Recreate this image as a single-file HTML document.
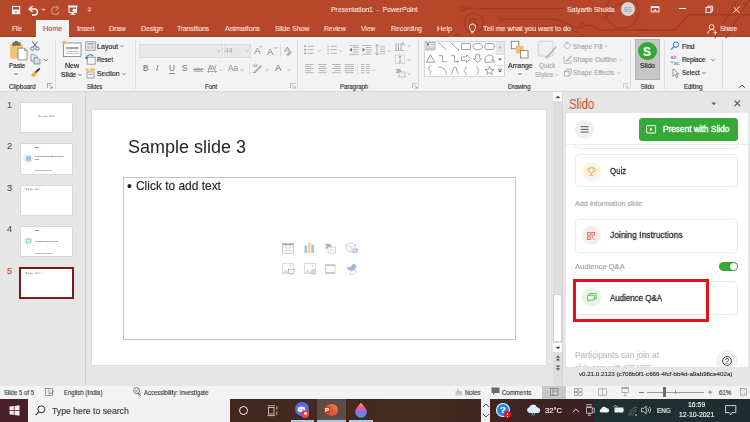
<!DOCTYPE html>
<html><head><meta charset="utf-8">
<style>
*{margin:0;padding:0;box-sizing:border-box}
html,body{width:750px;height:422px;overflow:hidden;background:#E6E6E6;font-family:"Liberation Sans",sans-serif}
.a{position:absolute}
.t{position:absolute;white-space:nowrap;line-height:1;will-change:transform;-webkit-text-stroke:0.15px currentColor}
svg{position:absolute;overflow:visible}
</style></head><body>
<div class="a" style="left:0px;top:0px;width:750px;height:37px;background:#B7472A;"></div>
<svg style="left:440px;top:0px;" width="210" height="37" viewBox="0 0 210 37"><g fill="none" stroke="#A33E24" stroke-width="1.5">
<circle cx="22.6" cy="8.4" r="2.1"/><path d="M24.7 8.4 H125"/>
<circle cx="34" cy="22.8" r="9.6"/><path d="M28.5 19 H37 M29.5 19 V24.5 A4 4 0 1 1 33 30"/>
<circle cx="61" cy="19.2" r="2"/><path d="M63 19.2 H117 L136.7 28 H140.5 M144.5 25.5 H152 L158.6 30 H212"/><circle cx="142.5" cy="25.5" r="2"/>
<path d="M90 32 Q100 25 117 25.5 H124 L146 37"/>
<circle cx="182.4" cy="11.5" r="16.5"/><path d="M163 19 L178 4 H192"/>
<circle cx="17" cy="36" r="2"/>
</g></svg>
<div class="a" style="left:0px;top:37px;width:750px;height:54px;background:#F3F3F3;"></div>
<div class="a" style="left:0px;top:91px;width:750px;height:1px;background:#D9D9D9;"></div>
<div class="a" style="left:0px;top:36px;width:750px;height:1px;background:#B13F22;"></div>
<div class="a" style="left:0px;top:37px;width:750px;height:1px;background:#FBFBFB;"></div>
<div class="a" style="left:35.5px;top:20px;width:33.5px;height:18px;background:#F3F3F3;border-left:0.8px solid #FAFAFA;border-right:0.8px solid #FAFAFA"></div>
<svg style="left:11px;top:5px;" width="10" height="10" viewBox="0 0 10 10"><rect x="1.5" y="1.5" width="7.2" height="7.2" fill="none" stroke="#FFFFFF" stroke-width="1.05"/><rect x="1.5" y="4.6" width="7.2" height="4.1" fill="#FFFFFF"/><rect x="3.8" y="6.3" width="2.2" height="1.4" fill="#C77A62"/></svg>
<svg style="left:28px;top:5px;" width="11" height="10" viewBox="0 0 11 10"><path d="M2 4 H6.5 A3 3 0 0 1 6.5 10 H4" fill="none" stroke="#FFFFFF" stroke-width="1.4"/><path d="M4.5 1 L1.2 4 L4.5 7" fill="none" stroke="#FFFFFF" stroke-width="1.4"/></svg>
<svg style="left:41px;top:8px;" width="5" height="4" viewBox="0 0 5 4"><path d="M0.5 0.8 L2.5 3 L4.5 0.8Z" fill="#F0C8BC"/></svg>
<svg style="left:50px;top:5px;" width="11" height="10" viewBox="0 0 11 10"><path d="M8 3 A3.8 3.8 0 1 0 9 6.5" fill="none" stroke="#D58A76" stroke-width="1.3"/><path d="M6 1 L8.5 3 L6 5" fill="none" stroke="#D58A76" stroke-width="1.2"/></svg>
<svg style="left:67px;top:5px;" width="12" height="10" viewBox="0 0 12 10"><rect x="1" y="0.5" width="9.5" height="1.4" fill="#FFFFFF"/><rect x="2" y="2" width="7.5" height="5.5" fill="none" stroke="#FFFFFF" stroke-width="1"/><circle cx="7.3" cy="5.2" r="1.8" fill="#FFFFFF"/><path d="M5.8 7.5 L5 9.5 M5.8 7.5 L7 9.5 M3.5 9.3 H8.5" stroke="#FFFFFF" stroke-width="0.9"/></svg>
<svg style="left:87px;top:7px;" width="5" height="6" viewBox="0 0 5 6"><rect x="0.6" y="0.6" width="3.6" height="0.9" fill="#F3D3C9"/><path d="M0.5 2.8 L2.4 5 L4.3 2.8Z" fill="#F3D3C9"/></svg>
<div class="t " style="left:331.40px;top:6px;font-size:7.90px;color:#F8E6E0;transform-origin:0 0;transform:scaleX(0.861);">Presentation1  -  PowerPoint</div>
<div class="t " style="left:567.20px;top:6px;font-size:7.70px;color:#FAEAE5;transform-origin:0 0;transform:scaleX(0.876);">Satyarth Shukla</div>
<div class="a" style="left:621px;top:2px;width:14px;height:14px;border-radius:50%;background:#D8D8D8"></div>
<div class="t " style="left:624.30px;top:7px;font-size:6.60px;color:#858585;transform-origin:0 0;transform:scaleX(0.852);-webkit-text-stroke:0;">SS</div>
<svg style="left:650px;top:6px;" width="10" height="7" viewBox="0 0 10 7"><rect x="1.2" y="0.7" width="7.8" height="5.2" fill="none" stroke="#FFFFFF" stroke-width="0.9"/><rect x="1.2" y="0.7" width="7.8" height="1.3" fill="#FFFFFF"/><path d="M3.3 4.9 L5.1 3 L6.9 4.9Z" fill="#FFFFFF"/></svg>
<div class="a" style="left:679.3px;top:8.3px;width:6.4px;height:0.9px;background:#FFFFFF;"></div>
<svg style="left:705px;top:5px;" width="9" height="9" viewBox="0 0 9 9"><rect x="1" y="2.6" width="5" height="5" fill="none" stroke="#FFFFFF" stroke-width="0.9"/><path d="M2.6 2.6 V1.2 H7.6 V6.2 H6" fill="none" stroke="#FFFFFF" stroke-width="0.9"/></svg>
<svg style="left:732px;top:5px;" width="9" height="9" viewBox="0 0 9 9"><path d="M1.2 1.5 L7.6 7.9 M7.6 1.5 L1.2 7.9" stroke="#FFFFFF" stroke-width="0.95"/></svg>
<svg style="left:640px;top:0px;" width="110" height="37" viewBox="0 0 110 37"><g fill="none" stroke="#A33E24" stroke-width="1.4"><path d="M-2 30 H35.2 L48.4 14.7 H112"/><path d="M74.8 38 L98.2 -1"/><path d="M86 38 L110 -2"/></g></svg>
<div class="t " style="left:12.00px;top:25px;font-size:7.40px;color:#F7E3DD;transform-origin:0 0;transform:scaleX(0.839);">File</div>
<div class="t " style="left:42.70px;top:25px;font-size:7.40px;color:#B7472A;transform-origin:0 0;transform:scaleX(0.978);">Home</div>
<div class="t " style="left:76.70px;top:25px;font-size:7.40px;color:#F7E3DD;transform-origin:0 0;transform:scaleX(0.951);">Insert</div>
<div class="t " style="left:109.30px;top:25px;font-size:7.40px;color:#F7E3DD;transform-origin:0 0;transform:scaleX(0.950);">Draw</div>
<div class="t " style="left:140.70px;top:25px;font-size:7.40px;color:#F7E3DD;transform-origin:0 0;transform:scaleX(0.938);">Design</div>
<div class="t " style="left:177.30px;top:25px;font-size:7.40px;color:#F7E3DD;transform-origin:0 0;transform:scaleX(0.891);">Transitions</div>
<div class="t " style="left:225.00px;top:25px;font-size:7.40px;color:#F7E3DD;transform-origin:0 0;transform:scaleX(0.956);">Animations</div>
<div class="t " style="left:275.00px;top:25px;font-size:7.40px;color:#F7E3DD;transform-origin:0 0;transform:scaleX(0.926);">Slide Show</div>
<div class="t " style="left:324.30px;top:25px;font-size:7.40px;color:#F7E3DD;transform-origin:0 0;transform:scaleX(0.894);">Review</div>
<div class="t " style="left:361.00px;top:25px;font-size:7.40px;color:#F7E3DD;transform-origin:0 0;transform:scaleX(0.899);">View</div>
<div class="t " style="left:390.70px;top:25px;font-size:7.40px;color:#F7E3DD;transform-origin:0 0;transform:scaleX(0.919);">Recording</div>
<div class="t " style="left:436.70px;top:25px;font-size:7.40px;color:#F7E3DD;transform-origin:0 0;transform:scaleX(0.986);">Help</div>
<svg style="left:468px;top:23px;" width="9" height="12" viewBox="0 0 9 12"><path d="M4.5 1 A3.2 3.2 0 0 0 2.4 6.6 L2.9 8.4 H6.1 L6.6 6.6 A3.2 3.2 0 0 0 4.5 1Z" fill="none" stroke="#FFFFFF" stroke-width="0.95"/><path d="M3.2 9.8 H5.8" stroke="#FFFFFF" stroke-width="0.9"/></svg>
<div class="t " style="left:483.20px;top:25px;font-size:7.40px;color:#FBEBE6;transform-origin:0 0;transform:scaleX(0.964);">Tell me what you want to do</div>
<svg style="left:707px;top:24px;" width="11" height="11" viewBox="0 0 11 11"><circle cx="4.6" cy="3" r="2.4" fill="none" stroke="#FFFFFF" stroke-width="0.9"/><path d="M0.9 9.8 A3.9 3.9 0 0 1 7.4 6.4" fill="none" stroke="#FFFFFF" stroke-width="0.9"/><path d="M8.3 6.8 V10.6 M6.4 8.7 H10.2" stroke="#FFFFFF" stroke-width="0.85"/></svg>
<div class="t " style="left:720.00px;top:25px;font-size:7.40px;color:#FBEBE6;transform-origin:0 0;transform:scaleX(0.876);">Share</div>
<div class="a" style="left:55px;top:40px;width:1px;height:49px;background:#DCDCDC;"></div>
<div class="a" style="left:134.7px;top:40px;width:1px;height:49px;background:#DCDCDC;"></div>
<div class="a" style="left:297.4px;top:40px;width:1px;height:49px;background:#DCDCDC;"></div>
<div class="a" style="left:418.4px;top:40px;width:1px;height:49px;background:#DCDCDC;"></div>
<div class="a" style="left:630.4px;top:40px;width:1px;height:49px;background:#DCDCDC;"></div>
<div class="a" style="left:663.7px;top:40px;width:1px;height:49px;background:#DCDCDC;"></div>
<div class="a" style="left:722px;top:40px;width:1px;height:49px;background:#DCDCDC;"></div>
<svg style="left:9px;top:41px;" width="19" height="20" viewBox="0 0 19 20"><rect x="1.2" y="2.8" width="12.6" height="14.8" rx="0.6" fill="#EFC26E"/>
<rect x="3.3" y="1.2" width="8.2" height="3.6" rx="0.5" fill="#6B6B6B"/><rect x="5.8" y="0" width="3.2" height="2" fill="#6B6B6B"/>
<path d="M9 7.2 H15.6 L18 9.6 V18.9 H9Z" fill="#FFFFFF" stroke="#7A7A7A" stroke-width="0.8"/>
<path d="M15.6 7.2 V9.6 H18" fill="none" stroke="#7A7A7A" stroke-width="0.7"/></svg>
<div class="t " style="left:8.70px;top:63px;font-size:7.10px;color:#1A1A1A;transform-origin:0 0;transform:scaleX(0.898);">Paste</div>
<svg style="left:12.399999999999999px;top:71.2px;" width="8" height="6" viewBox="0 0 8 6"><path d="M2.4 2.2 L4 3.8 L5.6 2.2" fill="none" stroke="#555" stroke-width="0.9"/></svg>
<svg style="left:30px;top:41px;" width="10" height="10" viewBox="0 0 10 10"><path d="M2.3 0.5 L6.8 6.5 M7.5 0.5 L3 6.5" stroke="#555" stroke-width="0.9"/>
<circle cx="2.4" cy="7.6" r="1.7" fill="none" stroke="#3F86D1" stroke-width="1"/><circle cx="7.4" cy="7.6" r="1.7" fill="none" stroke="#3F86D1" stroke-width="1"/></svg>
<svg style="left:30px;top:54px;" width="11" height="11" viewBox="0 0 11 11"><path d="M1 0.7 H5 L7 2.7 V7 H1Z" fill="#E3EEF8" stroke="#777" stroke-width="0.7"/>
<path d="M4 3.7 H8 L10 5.7 V10 H4Z" fill="#CFE1F3" stroke="#777" stroke-width="0.7"/></svg>
<svg style="left:41.7px;top:56.6px;" width="8" height="6" viewBox="0 0 8 6"><path d="M2.4 2.2 L4 3.8 L5.6 2.2" fill="none" stroke="#555" stroke-width="0.9"/></svg>
<svg style="left:30px;top:68px;" width="11" height="10" viewBox="0 0 11 10"><path d="M1 7 L4.5 3.5 L7 6 L3.5 9.5Z" fill="#EBB546"/>
<path d="M5.5 4.5 L9.8 0.5" stroke="#444" stroke-width="1.8"/></svg>
<div class="t " style="left:9.30px;top:84px;font-size:6.80px;color:#2E2E2E;transform-origin:0 0;transform:scaleX(0.917);">Clipboard</div>
<svg style="left:47px;top:83px;" width="6" height="6" viewBox="0 0 6 6"><path d="M0.5 0.5 H5 M0.5 0.5 V5" stroke="#888" stroke-width="0.7"/><path d="M2 2 L5.2 5.2 M5.2 3 V5.2 H3" stroke="#888" stroke-width="0.7" fill="none"/></svg>
<svg style="left:61px;top:40px;" width="21" height="18" viewBox="0 0 21 18"><rect x="2.5" y="3" width="17.5" height="13.5" fill="#FFFFFF" stroke="#7E7E7E" stroke-width="0.8"/>
<rect x="5" y="7" width="12.5" height="2.2" fill="#A9A9A9"/><rect x="5" y="11" width="12.5" height="0.9" fill="#BDBDBD"/><rect x="5" y="13" width="12.5" height="0.9" fill="#BDBDBD"/>
<circle cx="3" cy="2.5" r="1.7" fill="#F2B84B"/><path d="M3 0 V5 M0.5 2.5 H5.5 M1.2 0.7 L4.8 4.3 M4.8 0.7 L1.2 4.3" stroke="#F2B84B" stroke-width="0.5"/></svg>
<div class="t " style="left:65.30px;top:63px;font-size:7.10px;color:#1A1A1A;transform-origin:0 0;transform:scaleX(0.986);">New</div>
<div class="t " style="left:61.20px;top:72px;font-size:7.10px;color:#1A1A1A;transform-origin:0 0;transform:scaleX(0.969);">Slide</div>
<svg style="left:76.3px;top:72.3px;" width="8" height="6" viewBox="0 0 8 6"><path d="M2.4 2.2 L4 3.8 L5.6 2.2" fill="none" stroke="#555" stroke-width="0.9"/></svg>
<svg style="left:85px;top:41px;" width="11" height="10" viewBox="0 0 11 10"><rect x="0.8" y="0.8" width="9.4" height="8.4" fill="#F4F4F4" stroke="#8A8A8A" stroke-width="0.8"/><rect x="2.2" y="2.2" width="6.6" height="1.3" fill="#9A9A9A"/><rect x="2.2" y="4.5" width="3" height="3.3" fill="#C8C8C8"/><rect x="5.8" y="4.5" width="3" height="3.3" fill="#C8C8C8"/></svg>
<div class="t " style="left:97.00px;top:44px;font-size:7.10px;color:#1A1A1A;transform-origin:0 0;transform:scaleX(0.985);">Layout</div>
<svg style="left:117.7px;top:43.2px;" width="8" height="6" viewBox="0 0 8 6"><path d="M2.5 2.25 L4 3.75 L5.5 2.25" fill="none" stroke="#666" stroke-width="0.9"/></svg>
<svg style="left:85px;top:54px;" width="11" height="11" viewBox="0 0 11 11"><rect x="2.2" y="3.2" width="8" height="7" fill="#F4F4F4" stroke="#8A8A8A" stroke-width="0.8"/><path d="M1.2 4.5 A4 4 0 0 1 8 2" fill="none" stroke="#2E75C8" stroke-width="1.1"/><path d="M0 3 L1.4 5.4 L3.4 3.6" fill="#2E75C8"/></svg>
<div class="t " style="left:97.00px;top:57px;font-size:7.10px;color:#1A1A1A;transform-origin:0 0;transform:scaleX(0.863);">Reset</div>
<svg style="left:85px;top:68px;" width="11" height="11" viewBox="0 0 11 11"><rect x="0.5" y="0.5" width="3.2" height="2.2" fill="#EFB94F"/><rect x="5" y="0.5" width="5" height="2.2" fill="#EFB94F"/><rect x="2" y="4" width="7" height="6" fill="#F7F7F7" stroke="#8A8A8A" stroke-width="0.8"/><rect x="3.5" y="6" width="4" height="0.9" fill="#9A9A9A"/></svg>
<div class="t " style="left:97.00px;top:71px;font-size:7.10px;color:#1A1A1A;transform-origin:0 0;transform:scaleX(0.950);">Section</div>
<svg style="left:119.6px;top:70.8px;" width="8" height="6" viewBox="0 0 8 6"><path d="M2.5 2.25 L4 3.75 L5.5 2.25" fill="none" stroke="#666" stroke-width="0.9"/></svg>
<div class="t " style="left:86.80px;top:84px;font-size:6.80px;color:#2E2E2E;transform-origin:0 0;transform:scaleX(0.837);">Slides</div>
<div class="a" style="left:139px;top:44px;width:84px;height:14px;background:#E8E8E8;border:1px solid #DDDDDD"></div>
<div class="a" style="left:224px;top:44px;width:27px;height:14px;background:#E8E8E8;border:1px solid #DDDDDD"></div>
<svg style="left:215px;top:48px;" width="8" height="6" viewBox="0 0 8 6"><path d="M2.6 2.3 L4 3.7 L5.4 2.3" fill="none" stroke="#B5B5B5" stroke-width="0.9"/></svg>
<svg style="left:242.7px;top:48px;" width="8" height="6" viewBox="0 0 8 6"><path d="M2.6 2.3 L4 3.7 L5.4 2.3" fill="none" stroke="#B5B5B5" stroke-width="0.9"/></svg>
<div class="t " style="left:225.20px;top:48px;font-size:6.80px;color:#B0B0B0;">44</div>
<div class="t " style="left:254.00px;top:46px;font-size:9.50px;color:#9A9A9A;transform-origin:0 0;transform:scaleX(1.057);">A</div>
<svg style="left:259px;top:45px;" width="4" height="4" viewBox="0 0 4 4"><path d="M0.5 2.5 L1.8 0.8 L3.1 2.5" fill="none" stroke="#9A9A9A" stroke-width="0.7"/></svg>
<div class="t " style="left:267.10px;top:48px;font-size:8.30px;color:#9A9A9A;transform-origin:0 0;transform:scaleX(1.156);">A</div>
<svg style="left:273.5px;top:46px;" width="4" height="4" viewBox="0 0 4 4"><path d="M0.5 1 L1.8 2.7 L3.1 1" fill="none" stroke="#9A9A9A" stroke-width="0.7"/></svg>
<div class="a" style="left:279.5px;top:44px;width:1px;height:13px;background:#DDDDDD;"></div>
<div class="t " style="left:283.50px;top:46px;font-size:7.50px;color:#A0A0A0;transform-origin:0 0;transform:scaleX(1.299);">A</div>
<svg style="left:285px;top:48px;" width="8" height="8" viewBox="0 0 8 8"><path d="M1 6.5 L5 2.5 L7 4.5 L3 8.5Z" fill="#B5B5B5"/></svg>
<div class="t " style="left:142.70px;top:64px;font-size:8.30px;color:#8A8A8A;font-weight:bold;transform-origin:0 0;transform:scaleX(0.901);">B</div>
<div class="t" style="left:155.6px;top:63.82px;font-size:8.3px;color:#8A8A8A;font-style:italic">I</div>
<div class="t " style="left:168.80px;top:64px;font-size:8.30px;color:#8A8A8A;">U</div>
<div class="a" style="left:168.6px;top:73.0px;width:6.4px;height:0.8px;background:#8A8A8A;"></div>
<div class="t " style="left:182.30px;top:64px;font-size:8.30px;color:#8A8A8A;transform-origin:0 0;transform:scaleX(1.011);">S</div>
<div class="t " style="left:193.50px;top:67px;font-size:6.60px;color:#9A9A9A;transform-origin:0 0;transform:scaleX(0.874);">abc</div>
<div class="a" style="left:193.3px;top:68.9px;width:9.7px;height:0.7px;background:#9A9A9A;"></div>
<div class="t " style="left:207.50px;top:65px;font-size:6.80px;color:#8A8A8A;transform-origin:0 0;transform:scaleX(0.981);">AV</div>
<svg style="left:207px;top:70px;" width="10" height="3" viewBox="0 0 10 3"><path d="M0.5 1.5 H9.5 M0.5 1.5 L2 0.3 M0.5 1.5 L2 2.7 M9.5 1.5 L8 0.3 M9.5 1.5 L8 2.7" stroke="#8A8A8A" stroke-width="0.7" fill="none"/></svg>
<svg style="left:216.9px;top:66.5px;" width="8" height="6" viewBox="0 0 8 6"><path d="M2.7 2.35 L4 3.65 L5.3 2.35" fill="none" stroke="#B0B0B0" stroke-width="0.9"/></svg>
<div class="t " style="left:228.00px;top:64px;font-size:8.30px;color:#9A9A9A;transform-origin:0 0;transform:scaleX(1.015);">Aa</div>
<svg style="left:237.6px;top:66.5px;" width="8" height="6" viewBox="0 0 8 6"><path d="M2.7 2.35 L4 3.65 L5.3 2.35" fill="none" stroke="#B0B0B0" stroke-width="0.9"/></svg>
<div class="a" style="left:248.5px;top:63px;width:1px;height:12px;background:#DDDDDD;"></div>
<svg style="left:252px;top:62px;" width="11" height="11" viewBox="0 0 11 11"><text x="1" y="5" font-size="4.5" fill="#999" font-family="Liberation Sans">ab</text><path d="M2 9.5 L8.5 3 L10 4.5 L3.5 11Z" fill="#B0B0B0"/><path d="M0.5 10.5 H4" stroke="#999" stroke-width="0.8"/></svg>
<svg style="left:263.2px;top:66.5px;" width="8" height="6" viewBox="0 0 8 6"><path d="M2.7 2.35 L4 3.65 L5.3 2.35" fill="none" stroke="#B0B0B0" stroke-width="0.9"/></svg>
<div class="t " style="left:275.00px;top:64px;font-size:9.00px;color:#8A8A8A;transform-origin:0 0;transform:scaleX(1.083);">A</div>
<svg style="left:285px;top:66.5px;" width="8" height="6" viewBox="0 0 8 6"><path d="M2.7 2.35 L4 3.65 L5.3 2.35" fill="none" stroke="#B0B0B0" stroke-width="0.9"/></svg>
<div class="t " style="left:205.20px;top:84px;font-size:6.80px;color:#2E2E2E;transform-origin:0 0;transform:scaleX(0.897);">Font</div>
<svg style="left:290px;top:83.3px;" width="6" height="6" viewBox="0 0 6 6"><path d="M0.5 0.5 H5 M0.5 0.5 V5" stroke="#AAA" stroke-width="0.7"/><path d="M2 2 L5.2 5.2 M5.2 3 V5.2 H3" stroke="#AAA" stroke-width="0.7" fill="none"/></svg>
<svg style="left:304px;top:45px;" width="10" height="10" viewBox="0 0 10 10"><circle cx="1.2" cy="1.2" r="1" fill="#9A9A9A"/><rect x="3.5" y="0.8" width="6.3" height="0.8" fill="#A8A8A8"/><circle cx="1.2" cy="4.7" r="1" fill="#9A9A9A"/><rect x="3.5" y="4.3" width="6.3" height="0.8" fill="#A8A8A8"/><circle cx="1.2" cy="8.2" r="1" fill="#9A9A9A"/><rect x="3.5" y="7.8" width="6.3" height="0.8" fill="#A8A8A8"/></svg>
<svg style="left:315.4px;top:48px;" width="8" height="6" viewBox="0 0 8 6"><path d="M2.7 2.35 L4 3.65 L5.3 2.35" fill="none" stroke="#B5B5B5" stroke-width="0.9"/></svg>
<svg style="left:326.5px;top:45px;" width="10" height="10" viewBox="0 0 10 10"><rect x="0.6" y="0.3" width="0.9" height="2" fill="#9A9A9A"/><rect x="3.5" y="0.8" width="6.3" height="0.8" fill="#A8A8A8"/><rect x="0.6" y="3.8" width="0.9" height="2" fill="#9A9A9A"/><rect x="3.5" y="4.3" width="6.3" height="0.8" fill="#A8A8A8"/><rect x="0.6" y="7.3" width="0.9" height="2" fill="#9A9A9A"/><rect x="3.5" y="7.8" width="6.3" height="0.8" fill="#A8A8A8"/></svg>
<svg style="left:337.2px;top:48px;" width="8" height="6" viewBox="0 0 8 6"><path d="M2.7 2.35 L4 3.65 L5.3 2.35" fill="none" stroke="#B5B5B5" stroke-width="0.9"/></svg>
<svg style="left:348.5px;top:45px;" width="10" height="10" viewBox="0 0 10 10"><rect x="0" y="0.0" width="9.5" height="0.8" fill="#A8A8A8"/><rect x="4" y="2.2" width="5.5" height="0.8" fill="#A8A8A8"/><rect x="4" y="4.4" width="5.5" height="0.8" fill="#A8A8A8"/><rect x="4" y="6.6000000000000005" width="5.5" height="0.8" fill="#A8A8A8"/><rect x="0" y="8.8" width="9.5" height="0.8" fill="#A8A8A8"/><path d="M0.3 4.8 L3 2.8 V6.8Z" fill="#777"/></svg>
<svg style="left:361.5px;top:45px;" width="10" height="10" viewBox="0 0 10 10"><rect x="0" y="0.0" width="9.5" height="0.8" fill="#A8A8A8"/><rect x="4" y="2.2" width="5.5" height="0.8" fill="#A8A8A8"/><rect x="4" y="4.4" width="5.5" height="0.8" fill="#A8A8A8"/><rect x="4" y="6.6000000000000005" width="5.5" height="0.8" fill="#A8A8A8"/><rect x="0" y="8.8" width="9.5" height="0.8" fill="#A8A8A8"/><path d="M3.2 4.8 L0.5 2.8 V6.8Z" fill="#777"/></svg>
<svg style="left:375px;top:44px;" width="11" height="12" viewBox="0 0 11 12"><path d="M2 0.5 V11 M0.3 2.3 L2 0.5 L3.7 2.3 M0.3 9.2 L2 11 L3.7 9.2" stroke="#999" stroke-width="0.8" fill="none"/><rect x="5" y="2.5" width="5" height="0.8" fill="#A8A8A8"/><rect x="5" y="4.8" width="5" height="0.8" fill="#A8A8A8"/><rect x="5" y="7.1" width="5" height="0.8" fill="#A8A8A8"/><rect x="5" y="9.399999999999999" width="5" height="0.8" fill="#A8A8A8"/></svg>
<svg style="left:384.8px;top:48px;" width="8" height="6" viewBox="0 0 8 6"><path d="M2.7 2.35 L4 3.65 L5.3 2.35" fill="none" stroke="#B5B5B5" stroke-width="0.9"/></svg>
<svg style="left:304.8px;top:64px;" width="9" height="10" viewBox="0 0 9 10"><rect x="0" y="0.0" width="8.6" height="0.8" fill="#A8A8A8"/><rect x="0" y="2.1" width="6" height="0.8" fill="#A8A8A8"/><rect x="0" y="4.2" width="8.6" height="0.8" fill="#A8A8A8"/><rect x="0" y="6.300000000000001" width="6" height="0.8" fill="#A8A8A8"/><rect x="0" y="8.4" width="8.6" height="0.8" fill="#A8A8A8"/></svg>
<svg style="left:317.9px;top:64px;" width="9" height="10" viewBox="0 0 9 10"><rect x="0.0" y="0.0" width="8.6" height="0.8" fill="#A8A8A8"/><rect x="1.2999999999999998" y="2.1" width="6" height="0.8" fill="#A8A8A8"/><rect x="0.0" y="4.2" width="8.6" height="0.8" fill="#A8A8A8"/><rect x="1.2999999999999998" y="6.300000000000001" width="6" height="0.8" fill="#A8A8A8"/><rect x="0.0" y="8.4" width="8.6" height="0.8" fill="#A8A8A8"/></svg>
<svg style="left:331.9px;top:64px;" width="9" height="10" viewBox="0 0 9 10"><rect x="0.0" y="0.0" width="8.6" height="0.8" fill="#A8A8A8"/><rect x="2.5999999999999996" y="2.1" width="6" height="0.8" fill="#A8A8A8"/><rect x="0.0" y="4.2" width="8.6" height="0.8" fill="#A8A8A8"/><rect x="2.5999999999999996" y="6.300000000000001" width="6" height="0.8" fill="#A8A8A8"/><rect x="0.0" y="8.4" width="8.6" height="0.8" fill="#A8A8A8"/></svg>
<svg style="left:345px;top:64px;" width="9" height="10" viewBox="0 0 9 10"><rect x="0" y="0.0" width="8.6" height="0.8" fill="#A8A8A8"/><rect x="0" y="2.1" width="8.6" height="0.8" fill="#A8A8A8"/><rect x="0" y="4.2" width="8.6" height="0.8" fill="#A8A8A8"/><rect x="0" y="6.300000000000001" width="8.6" height="0.8" fill="#A8A8A8"/><rect x="0" y="8.4" width="8.6" height="0.8" fill="#A8A8A8"/></svg>
<div class="a" style="left:356.5px;top:63px;width:1px;height:12px;background:#DDDDDD;"></div>
<svg style="left:360.8px;top:64px;" width="9" height="10" viewBox="0 0 9 10"><rect x="0" y="0.0" width="3.6" height="0.8" fill="#A8A8A8"/><rect x="5" y="0.0" width="3.6" height="0.8" fill="#A8A8A8"/><rect x="0" y="2.1" width="3.6" height="0.8" fill="#A8A8A8"/><rect x="5" y="2.1" width="3.6" height="0.8" fill="#A8A8A8"/><rect x="0" y="4.2" width="3.6" height="0.8" fill="#A8A8A8"/><rect x="5" y="4.2" width="3.6" height="0.8" fill="#A8A8A8"/><rect x="0" y="6.300000000000001" width="3.6" height="0.8" fill="#A8A8A8"/><rect x="5" y="6.300000000000001" width="3.6" height="0.8" fill="#A8A8A8"/><rect x="0" y="8.4" width="3.6" height="0.8" fill="#A8A8A8"/><rect x="5" y="8.4" width="3.6" height="0.8" fill="#A8A8A8"/></svg>
<svg style="left:369.9px;top:66.5px;" width="8" height="6" viewBox="0 0 8 6"><path d="M2.7 2.35 L4 3.65 L5.3 2.35" fill="none" stroke="#B5B5B5" stroke-width="0.9"/></svg>
<svg style="left:395px;top:40px;" width="11" height="11" viewBox="0 0 11 11"><path d="M1 10 V3 M3.5 10 V3 M6 10 V3" stroke="#999" stroke-width="0.8"/><text x="6" y="6" font-size="6" fill="#999" font-family="Liberation Sans">A</text><path d="M0 10.5 H9" stroke="#999" stroke-width="0.7"/></svg>
<svg style="left:405.2px;top:43px;" width="8" height="6" viewBox="0 0 8 6"><path d="M2.7 2.35 L4 3.65 L5.3 2.35" fill="none" stroke="#B5B5B5" stroke-width="0.9"/></svg>
<svg style="left:395px;top:54px;" width="11" height="11" viewBox="0 0 11 11"><rect x="0.5" y="1" width="9" height="8.5" fill="none" stroke="#AAA" stroke-width="0.7" stroke-dasharray="1.2 0.8"/><path d="M5 1.8 V8.7 M3.6 3.2 L5 1.8 L6.4 3.2 M3.6 7.3 L5 8.7 L6.4 7.3" stroke="#999" stroke-width="0.8" fill="none"/></svg>
<svg style="left:405.2px;top:56.5px;" width="8" height="6" viewBox="0 0 8 6"><path d="M2.7 2.35 L4 3.65 L5.3 2.35" fill="none" stroke="#B5B5B5" stroke-width="0.9"/></svg>
<svg style="left:395px;top:68px;" width="11" height="10" viewBox="0 0 11 10"><path d="M0.5 1 H5 L6.5 3 L5 5 H0.5 L2 3Z" fill="#A9B3B3"/><rect x="4" y="4" width="6" height="5" fill="#F3F3F3" stroke="#AAA" stroke-width="0.7"/></svg>
<svg style="left:405.2px;top:70.5px;" width="8" height="6" viewBox="0 0 8 6"><path d="M2.7 2.35 L4 3.65 L5.3 2.35" fill="none" stroke="#B5B5B5" stroke-width="0.9"/></svg>
<div class="t " style="left:339.90px;top:84px;font-size:6.80px;color:#2E2E2E;transform-origin:0 0;transform:scaleX(0.882);">Paragraph</div>
<svg style="left:412px;top:83px;" width="6" height="6" viewBox="0 0 6 6"><path d="M0.5 0.5 H5 M0.5 0.5 V5" stroke="#AAA" stroke-width="0.7"/><path d="M2 2 L5.2 5.2 M5.2 3 V5.2 H3" stroke="#AAA" stroke-width="0.7" fill="none"/></svg>
<div class="a" style="left:424px;top:41px;width:81px;height:36px;background:#FFFFFF;border:1px solid #D6D6D6"></div>
<div class="a" style="left:496px;top:42px;width:8px;height:12px;background:#E6E6E6;"></div>
<div class="a" style="left:496px;top:54px;width:8px;height:11px;background:#FFFFFF;border-top:1px solid #E0E0E0"></div>
<div class="a" style="left:496px;top:65px;width:8px;height:11px;background:#FFFFFF;border-top:1px solid #E0E0E0"></div>
<svg style="left:497px;top:45px;" width="6" height="5" viewBox="0 0 6 5"><path d="M1 3.2 L3 1.2 L5 3.2Z" fill="#B0B0B0"/></svg>
<svg style="left:497px;top:57px;" width="6" height="5" viewBox="0 0 6 5"><path d="M1 1.5 L3 3.5 L5 1.5Z" fill="#555"/></svg>
<svg style="left:497px;top:68px;" width="6" height="6" viewBox="0 0 6 6"><rect x="1" y="0.8" width="4" height="0.7" fill="#555"/><path d="M1 2.5 L3 4.5 L5 2.5Z" fill="#555"/></svg>
<svg style="left:424px;top:41px;" width="72" height="36" viewBox="0 0 72 36"><rect x="2" y="1.5" width="9" height="7.5" fill="#E8EEF6" stroke="#888" stroke-width="0.6"/><rect x="3" y="2.5" width="2" height="2" fill="#2E75C8"/><path d="M6 3.5 H10 M3 6 H10 M3 7.5 H10" stroke="#999" stroke-width="0.5"/><path d="M14.5 1.5 L22.5 9" stroke="#666" stroke-width="0.6"/><path d="M26.5 1.5 L34.5 9" stroke="#666" stroke-width="0.6"/><circle cx="34.5" cy="9" r="0.7" fill="#666"/><rect x="37.5" y="2.5" width="9" height="6" rx="0.3" fill="none" stroke="#666" stroke-width="0.6"/><ellipse cx="53.7" cy="5.5" rx="4.7" ry="3.2" fill="none" stroke="#666" stroke-width="0.6"/><rect x="61" y="2.5" width="9.2" height="6" rx="1.6" fill="none" stroke="#666" stroke-width="0.6"/><g transform="translate(0,3.7)"><path d="M2.5 17.5 L6.5 10 L10.5 17.5Z" fill="none" stroke="#666" stroke-width="0.6"/><path d="M14.5 11 H18.5 V17 H22.5" fill="none" stroke="#666" stroke-width="0.6"/><path d="M26.5 11 H30.5 V17 H34" fill="none" stroke="#666" stroke-width="0.6"/><path d="M33 15.8 L34.8 17 L33 18.2" fill="none" stroke="#666" stroke-width="0.5"/><path d="M37.5 12.2 H42.5 V10.2 L46.5 14 L42.5 17.8 V15.8 H37.5Z" fill="none" stroke="#666" stroke-width="0.6"/><path d="M51.7 10 H55.7 V14 H57.7 L53.7 18 L49.7 14 H51.7Z" fill="none" stroke="#666" stroke-width="0.6"/><path d="M61 17.5 V13 L64 10.5 H67.5 A2.7 2.7 0 0 1 67.5 15.5 H70.2 V17.5Z" fill="none" stroke="#666" stroke-width="0.6"/></g><g transform="translate(0,3.6)"><path d="M4 22 C7 23 3 25 6 26 C9 27 4 28 7 30" fill="none" stroke="#666" stroke-width="0.6"/><path d="M5 22 L7.5 21" stroke="#666" stroke-width="0.5"/><path d="M14.5 22.5 C19 22.5 22 25 22.5 30" fill="none" stroke="#666" stroke-width="0.6"/><path d="M26.5 29.5 C29 29.5 29 22 31 22 C33 22 32.5 29.5 35 29.5" fill="none" stroke="#666" stroke-width="0.6"/><path d="M42.5 22 C41 22 41.5 25.5 40 26 C41.5 26.5 41 30 42.5 30" fill="none" stroke="#666" stroke-width="0.6"/><path d="M52.5 22 C54 22 53.5 25.5 55 26 C53.5 26.5 54 30 52.5 30" fill="none" stroke="#666" stroke-width="0.6"/><path d="M65.5 21.5 L66.6 24.8 H70 L67.3 26.8 L68.3 30 L65.5 28 L62.7 30 L63.7 26.8 L61 24.8 H64.4Z" fill="none" stroke="#666" stroke-width="0.6"/></g></svg>
<svg style="left:510px;top:40px;" width="20" height="19" viewBox="0 0 20 19"><rect x="1.3" y="1.3" width="7.5" height="7.5" fill="#FFFFFF" stroke="#777" stroke-width="0.8"/><rect x="6" y="6" width="7.5" height="7.5" fill="#EFC06A"/><rect x="10.5" y="10.5" width="7.5" height="7.5" fill="#FFFFFF" stroke="#777" stroke-width="0.8"/></svg>
<div class="t " style="left:507.50px;top:63px;font-size:7.10px;color:#1A1A1A;transform-origin:0 0;transform:scaleX(0.974);">Arrange</div>
<svg style="left:515.6px;top:71.2px;" width="8" height="6" viewBox="0 0 8 6"><path d="M2.4 2.2 L4 3.8 L5.6 2.2" fill="none" stroke="#555" stroke-width="0.9"/></svg>
<svg style="left:537px;top:40px;" width="21" height="19" viewBox="0 0 21 19"><rect x="1.2" y="1.2" width="15" height="15" rx="2.5" fill="#F1EEF3" stroke="#C8C8C8" stroke-width="0.8"/><path d="M8 18 L19 6 L20 7 L10 18.5Z" fill="#B8B8B8"/></svg>
<div class="t " style="left:539.20px;top:63px;font-size:7.10px;color:#A6A6A6;transform-origin:0 0;transform:scaleX(0.904);">Quick</div>
<div class="t " style="left:534.90px;top:72px;font-size:7.10px;color:#A6A6A6;transform-origin:0 0;transform:scaleX(0.936);">Styles</div>
<svg style="left:552.5px;top:72.3px;" width="8" height="6" viewBox="0 0 8 6"><path d="M2.6 2.3 L4 3.7 L5.4 2.3" fill="none" stroke="#B5B5B5" stroke-width="0.9"/></svg>
<svg style="left:563px;top:41px;" width="9" height="9" viewBox="0 0 9 9"><path d="M1 4.5 L4.5 1 L8 4.5 L4.5 8Z" fill="none" stroke="#AAA" stroke-width="0.8"/><path d="M2 0.5 L5 3" stroke="#AAA" stroke-width="0.7"/></svg>
<div class="t " style="left:572.80px;top:44px;font-size:7.10px;color:#A6A6A6;transform-origin:0 0;transform:scaleX(0.934);">Shape Fill</div>
<svg style="left:602.4px;top:43.3px;" width="8" height="6" viewBox="0 0 8 6"><path d="M2.7 2.35 L4 3.65 L5.3 2.35" fill="none" stroke="#B5B5B5" stroke-width="0.9"/></svg>
<svg style="left:563px;top:54.5px;" width="9" height="9" viewBox="0 0 9 9"><path d="M1 1.5 V8.3 H7.8 V5" fill="none" stroke="#AAA" stroke-width="0.8"/><path d="M3 6.5 L8.5 1 " stroke="#AAA" stroke-width="1.1"/></svg>
<div class="t " style="left:572.80px;top:57px;font-size:7.10px;color:#A6A6A6;transform-origin:0 0;transform:scaleX(0.976);">Shape Outline</div>
<svg style="left:616.8px;top:56.6px;" width="8" height="6" viewBox="0 0 8 6"><path d="M2.7 2.35 L4 3.65 L5.3 2.35" fill="none" stroke="#B5B5B5" stroke-width="0.9"/></svg>
<svg style="left:563px;top:68px;" width="9" height="9" viewBox="0 0 9 9"><path d="M1.5 3.5 L4 1 H8.5 V5.5 L6 8 H1.5Z" fill="#E0E0E0" stroke="#AAA" stroke-width="0.7"/><rect x="1.5" y="3.5" width="4.5" height="4.5" fill="#F5F5F5" stroke="#AAA" stroke-width="0.7"/></svg>
<div class="t " style="left:572.80px;top:70px;font-size:7.10px;color:#A6A6A6;transform-origin:0 0;transform:scaleX(0.939);">Shape Effects</div>
<svg style="left:614.5px;top:69.8px;" width="8" height="6" viewBox="0 0 8 6"><path d="M2.7 2.35 L4 3.65 L5.3 2.35" fill="none" stroke="#B5B5B5" stroke-width="0.9"/></svg>
<div class="t " style="left:508.40px;top:84px;font-size:6.80px;color:#2E2E2E;transform-origin:0 0;transform:scaleX(0.898);">Drawing</div>
<svg style="left:623px;top:83px;" width="6" height="6" viewBox="0 0 6 6"><path d="M0.5 0.5 H5 M0.5 0.5 V5" stroke="#BBB" stroke-width="0.7"/><path d="M2 2 L5.2 5.2 M5.2 3 V5.2 H3" stroke="#BBB" stroke-width="0.7" fill="none"/></svg>
<div class="a" style="left:635px;top:39px;width:25px;height:41px;background:#C6C6C6;border:1px solid #B4B4B4"></div>
<div class="a" style="left:638px;top:41.6px;width:18.6px;height:18.6px;border-radius:50%;background:#34A836"></div>
<div class="t " style="left:643.30px;top:46px;font-size:12.50px;color:#FFFFFF;font-weight:bold;transform-origin:0 0;transform:scaleX(0.959);">S</div>
<div class="t " style="left:639.60px;top:63px;font-size:7.10px;color:#1A1A1A;transform-origin:0 0;transform:scaleX(0.956);">Slido</div>
<div class="t " style="left:640.50px;top:84px;font-size:6.80px;color:#2E2E2E;transform-origin:0 0;transform:scaleX(0.880);">Slido</div>
<svg style="left:670px;top:41px;" width="10" height="9" viewBox="0 0 10 9"><circle cx="6" cy="3.6" r="2.7" fill="none" stroke="#2E75C8" stroke-width="1"/><path d="M4 5.6 L1 8.6" stroke="#2E75C8" stroke-width="1.3"/></svg>
<div class="t " style="left:681.50px;top:44px;font-size:7.10px;color:#1A1A1A;transform-origin:0 0;transform:scaleX(0.919);">Find</div>
<svg style="left:670px;top:54px;" width="11" height="11" viewBox="0 0 11 11"><text x="0.5" y="4.8" font-size="5.5" fill="#7B5CA9" font-family="Liberation Sans">ab</text><text x="4" y="10.5" font-size="5.5" fill="#2E75C8" font-family="Liberation Sans">ac</text><path d="M0.5 7 L2 9 L3.5 7" fill="none" stroke="#2E75C8" stroke-width="0.6"/></svg>
<div class="t " style="left:681.50px;top:57px;font-size:7.10px;color:#1A1A1A;transform-origin:0 0;transform:scaleX(0.902);">Replace</div>
<svg style="left:708.7px;top:56.6px;" width="8" height="6" viewBox="0 0 8 6"><path d="M2.5 2.25 L4 3.75 L5.5 2.25" fill="none" stroke="#555" stroke-width="0.9"/></svg>
<svg style="left:671.5px;top:67.5px;" width="8" height="10" viewBox="0 0 8 10"><path d="M1 0.8 V8.5 L3 6.5 L4.6 9.6 L5.8 9 L4.3 6 H7Z" fill="#FFFFFF" stroke="#666" stroke-width="0.7"/></svg>
<div class="t " style="left:681.50px;top:70px;font-size:7.10px;color:#1A1A1A;transform-origin:0 0;transform:scaleX(0.907);">Select</div>
<svg style="left:699.7px;top:69.6px;" width="8" height="6" viewBox="0 0 8 6"><path d="M2.5 2.25 L4 3.75 L5.5 2.25" fill="none" stroke="#555" stroke-width="0.9"/></svg>
<div class="t " style="left:683.80px;top:84px;font-size:6.80px;color:#2E2E2E;transform-origin:0 0;transform:scaleX(0.890);">Editing</div>
<svg style="left:738px;top:84px;" width="8" height="5" viewBox="0 0 8 5"><path d="M0.8 4 L4 1 L7.2 4" fill="none" stroke="#555" stroke-width="0.9"/></svg>
<div class="a" style="left:85px;top:92px;width:1px;height:293px;background:#D2D2D2;"></div>
<div class="a" style="left:20.7px;top:102.7px;width:51.5px;height:29.2px;background:#fff;box-shadow:0 0 0 0.6px #D0D0D0"></div>
<div class="t " style="left:6.60px;top:101px;font-size:9.30px;color:#505050;-webkit-text-stroke:0.1px currentColor;">1</div>
<div class="t" style="left:38.10px;top:114.53px;font-size:10px;transform-origin:0 0;transform:scale(0.290);color:#8A8A8A;">Sample slide</div>
<div class="a" style="left:20.7px;top:144.4px;width:51.5px;height:29.2px;background:#fff;box-shadow:0 0 0 0.6px #D0D0D0"></div>
<div class="t " style="left:6.60px;top:142px;font-size:9.30px;color:#505050;-webkit-text-stroke:0.1px currentColor;">2</div>
<div class="a" style="left:34.9px;top:147.3px;width:4.2px;height:1.1px;background:#5FBF4F;"></div>
<div class="a" style="left:23.2px;top:154px;width:9.4px;height:9.4px;border-radius:50%;background:#E6F0FB"></div>
<svg style="left:25.6px;top:156.4px;" width="5" height="5" viewBox="0 0 5 5"><rect x="0.3" y="0.3" width="4.4" height="4.4" fill="#7FB0E6"/><path d="M0.3 1.8 H4.7 M0.3 3.2 H4.7 M2.5 0.3 V4.7" stroke="#E6F0FB" stroke-width="0.35"/></svg>
<div class="t" style="left:34.90px;top:156.33px;font-size:10px;transform-origin:0 0;transform:scale(0.180);color:#555;">What do you think about the sample</div>
<div class="t" style="left:34.90px;top:159.23px;font-size:10px;transform-origin:0 0;transform:scale(0.180);color:#555;">quiz?</div>
<div class="a" style="left:34.9px;top:170.3px;width:17px;height:0.6px;background:#BDBDBD;"></div>
<div class="a" style="left:20.7px;top:185.8px;width:51.5px;height:29.2px;background:#fff;box-shadow:0 0 0 0.6px #D0D0D0"></div>
<div class="t " style="left:6.60px;top:184px;font-size:9.30px;color:#505050;-webkit-text-stroke:0.1px currentColor;">3</div>
<div class="t" style="left:25.20px;top:188.20px;font-size:10px;transform-origin:0 0;transform:scale(0.260);color:#8A8A8A;">Sample slide 2</div>
<div class="a" style="left:20.7px;top:227.0px;width:51.5px;height:29.2px;background:#fff;box-shadow:0 0 0 0.6px #D0D0D0"></div>
<div class="t " style="left:6.60px;top:225px;font-size:9.30px;color:#505050;-webkit-text-stroke:0.1px currentColor;">4</div>
<div class="a" style="left:34.9px;top:229.5px;width:4.2px;height:1.1px;background:#5FBF4F;"></div>
<div class="a" style="left:23.5px;top:236.9px;width:8.6px;height:8.6px;border-radius:50%;background:#E3F4F4"></div>
<svg style="left:25.5px;top:238.8px;" width="5" height="5" viewBox="0 0 5 5"><path d="M0.4 0.4 H4.6 V3.2 H2 L0.9 4.4 V3.2 H0.4Z" fill="none" stroke="#4DB6C0" stroke-width="0.55"/></svg>
<div class="t" style="left:34.90px;top:240.61px;font-size:10px;transform-origin:0 0;transform:scale(0.165);color:#555;">What does my stress level like?</div>
<div class="a" style="left:34.9px;top:253.1px;width:17px;height:0.6px;background:#BDBDBD;"></div>
<div class="a" style="left:19.1px;top:267px;width:54.9px;height:32px;background:#fff;border:2.2px solid #7B1A1C"></div>
<div class="t " style="left:6.60px;top:267px;font-size:9.30px;color:#D24A26;-webkit-text-stroke:0.1px currentColor;">5</div>
<div class="t" style="left:25.20px;top:271.60px;font-size:10px;transform-origin:0 0;transform:scale(0.260);color:#8A8A8A;">Sample slide 3</div>
<div class="a" style="left:92.2px;top:110px;width:454px;height:254.6px;background:#fff;box-shadow:0 0 0 0.5px #D8D8D8"></div>
<div class="t" style="left:127.6px;top:138.2px;font-size:18px;color:#262626;line-height:1;-webkit-text-stroke:0">Sample slide 3</div>
<div class="a" style="left:123.4px;top:177.4px;width:392.6px;height:162.8px;border:1px solid #C6C6C6"></div>
<div class="t" style="left:127.3px;top:178.8px;font-size:14px;color:#1F1F1F;line-height:1">•</div>
<div class="t" style="left:136px;top:181.3px;font-size:11.95px;color:#1F1F1F;line-height:1">Click to add text</div>
<svg style="left:282px;top:242.5px;" width="12" height="11" viewBox="0 0 12 11"><rect x="0.5" y="0.5" width="11" height="9.8" fill="#fff" stroke="#BDBDBD" stroke-width="0.7"/><rect x="0.5" y="0.5" width="11" height="1.8" fill="#A8A8A8"/><path d="M0.5 4.8 H11.5 M0.5 7.5 H11.5 M4.2 2 V10.3 M7.8 2 V10.3" stroke="#C8C8C8" stroke-width="0.5"/></svg>
<svg style="left:303.5px;top:242px;" width="10.5" height="11.5" viewBox="0 0 10.5 11.5"><rect x="0.5" y="3.5" width="2.6" height="7.5" fill="#A9C1E1"/><rect x="3.9" y="0.5" width="2.6" height="10.5" fill="#F3D59E"/><rect x="7.3" y="2.5" width="2.6" height="8.5" fill="#BDBDBD"/></svg>
<svg style="left:324px;top:242.5px;" width="12" height="11" viewBox="0 0 12 11"><path d="M0.5 0.8 H6 L8 3.2 L6 5.6 H0.5 L2.5 3.2Z" fill="#A7BDB9"/><rect x="4" y="4" width="7.5" height="6" fill="#fff" stroke="#BDBDBD" stroke-width="0.7"/><rect x="6" y="6.3" width="3.5" height="1.5" fill="none" stroke="#C8C8C8" stroke-width="0.4"/></svg>
<svg style="left:345.5px;top:242px;" width="13" height="12" viewBox="0 0 13 12"><path d="M5 0.5 L9.5 2.8 V8 L5 10.3 L0.5 8 V2.8Z" fill="#fff" stroke="#BDBDBD" stroke-width="0.7"/><path d="M0.5 2.8 L5 5 L9.5 2.8 M5 5 V10.3" stroke="#BDBDBD" stroke-width="0.6" fill="none"/><circle cx="9.2" cy="8.6" r="3" fill="#B5CDE8"/><path d="M9.2 6 V11.2 M6.6 8.6 H11.8" stroke="#fff" stroke-width="0.4"/></svg>
<svg style="left:282px;top:263px;" width="13" height="12" viewBox="0 0 13 12"><rect x="0.5" y="0.5" width="11" height="10" fill="#fff" stroke="#C6C6C6" stroke-width="0.6"/><path d="M0.8 10 L4 6 L7 10Z" fill="#D6DEE8"/><circle cx="8.5" cy="2.8" r="0.9" fill="#F2C67E"/><rect x="6.5" y="6.3" width="5.5" height="4" fill="#fff" stroke="#8FB2DD" stroke-width="0.7"/><path d="M9.2 10.3 V11.5 M8 11.6 H10.5" stroke="#8FB2DD" stroke-width="0.5"/></svg>
<svg style="left:303.5px;top:263px;" width="13" height="12" viewBox="0 0 13 12"><rect x="0.5" y="0.5" width="11" height="10" fill="#fff" stroke="#C6C6C6" stroke-width="0.6"/><path d="M0.8 10 L4 6 L7 10Z" fill="#D6DEE8"/><circle cx="8.5" cy="2.8" r="0.9" fill="#F2C67E"/><circle cx="9.5" cy="8.8" r="2.9" fill="#B5CDE8"/><path d="M9.5 6.2 V11.4 M6.9 8.8 H12.1" stroke="#fff" stroke-width="0.4"/></svg>
<svg style="left:324.5px;top:263.5px;" width="11" height="10" viewBox="0 0 11 10"><rect x="0.5" y="0.8" width="9.5" height="8.5" fill="#fff" stroke="#BDBDBD" stroke-width="0.7"/><rect x="0.5" y="0.8" width="9.5" height="1.1" fill="#BDBDBD"/><rect x="0.5" y="8.2" width="9.5" height="1.1" fill="#BDBDBD"/></svg>
<svg style="left:345.5px;top:262.5px;" width="12" height="12" viewBox="0 0 12 12"><path d="M1 3.5 C3 5 5 4 6 2 C7 0.5 9 0.8 9.5 2.5 L11 3 L9.8 4 C9.5 7 7 8.5 3.5 7.5 C2 7 1 5.5 1 3.5Z" fill="#9DB9DD"/><path d="M4 11.5 C4 8.5 6.5 7 10 7 C10 10 8 11.5 4 11.5Z" fill="#fff" stroke="#BDBDBD" stroke-width="0.6"/></svg>
<div class="a" style="left:552.6px;top:92px;width:9.7px;height:293px;background:#DEDEDE;"></div>
<div class="a" style="left:552.6px;top:92.3px;width:9.7px;height:8.8px;background:#FFFFFF;"></div>
<svg style="left:554.5px;top:94.5px;" width="6" height="4" viewBox="0 0 6 4"><path d="M0.5 3.3 L3 0.8 L5.5 3.3Z" fill="#444"/></svg>
<div class="a" style="left:552.6px;top:294.2px;width:9.7px;height:47.9px;background:#FFFFFF;border:0.6px solid #CFCFCF"></div>
<div class="a" style="left:552.6px;top:343.1px;width:9.7px;height:9px;background:#FFFFFF;"></div>
<svg style="left:554.5px;top:345.7px;" width="6" height="4" viewBox="0 0 6 4"><path d="M0.5 0.8 L3 3.3 L5.5 0.8Z" fill="#444"/></svg>
<svg style="left:554.5px;top:354.8px;" width="6" height="6" viewBox="0 0 6 6"><path d="M0.8 2.8 L3 0.6 L5.2 2.8Z M0.8 5.4 L3 3.2 L5.2 5.4Z" fill="#555"/></svg>
<svg style="left:554.5px;top:364.8px;" width="6" height="6" viewBox="0 0 6 6"><path d="M0.8 0.6 L3 2.8 L5.2 0.6Z M0.8 3.2 L3 5.4 L5.2 3.2Z" fill="#555"/></svg>
<div class="a" style="left:562.3px;top:92px;width:1px;height:293px;background:#D4D4D4;"></div>
<div class="a" style="left:563.3px;top:92px;width:186.7px;height:293.5px;background:#E6E6E6;"></div>
<div class="t " style="left:569.40px;top:97px;font-size:14.00px;color:#C5502E;transform-origin:0 0;transform:scaleX(0.813);-webkit-text-stroke:0;">Slido</div>
<svg style="left:711px;top:102px;" width="6" height="4" viewBox="0 0 6 4"><path d="M0.3 0.5 L2.8 3.2 L5.3 0.5Z" fill="#666"/></svg>
<svg style="left:734px;top:100.3px;" width="7" height="7" viewBox="0 0 7 7"><path d="M0.6 0.6 L6 6 M6 0.6 L0.6 6" stroke="#555" stroke-width="1.1"/></svg>
<div class="a" style="left:565.6px;top:113.1px;width:182px;height:253.9px;background:#FFFFFF;"></div>
<div class="a" style="left:575.2px;top:135px;width:162.8px;height:14.3px;border:0.8px solid #EBEBEB;border-top:none;border-radius:0 0 4px 4px;background:#fff"></div>
<div class="a" style="left:565.6px;top:113.1px;width:182px;height:31.2px;background:#FFFFFF;"></div>
<div class="a" style="left:565.6px;top:144.3px;width:182px;height:0.8px;background:#EDEDED;"></div>
<div class="a" style="left:638.5px;top:117.5px;width:99.4px;height:23.2px;border-radius:3.5px;background:#34A936"></div>
<svg style="left:646.3px;top:124.8px;" width="11" height="9" viewBox="0 0 11 9"><rect x="0.6" y="0.6" width="9" height="7.4" rx="0.6" fill="none" stroke="#FFFFFF" stroke-width="1"/><path d="M4 2.6 L6.8 4.3 L4 6Z" fill="#FFFFFF"/></svg>
<div class="t " style="left:662.50px;top:125px;font-size:8.60px;color:#FFFFFF;transform-origin:0 0;transform:scaleX(0.963);-webkit-text-stroke:0.45px currentColor;">Present with Slido</div>
<div class="a" style="left:575.2px;top:119.9px;width:18.8px;height:18.8px;border-radius:50%;background:#F0F0F0"></div>
<svg style="left:580px;top:125.8px;" width="10" height="7" viewBox="0 0 10 7"><path d="M0.6 0.7 H8.6 M0.6 3.4 H8.6 M0.6 6.1 H8.6" stroke="#555" stroke-width="0.95"/></svg>
<div class="a" style="left:575.2px;top:154.3px;width:162.8px;height:33.2px;border:0.8px solid #EBEBEB;border-radius:4px;background:#fff"></div>
<div class="a" style="left:581.8px;top:161.6px;width:19.0px;height:19.0px;border-radius:50%;background:#FFF3E3"></div>
<svg style="left:587px;top:166.5px;" width="9" height="9.5" viewBox="0 0 9 9.5"><path d="M2.3 0.8 H6.7 V3.6 A2.2 2.2 0 0 1 2.3 3.6Z" fill="none" stroke="#F4A340" stroke-width="0.9"/><path d="M2.3 1.5 H0.8 A1.6 1.6 0 0 0 2.6 4.3 M6.7 1.5 H8.2 A1.6 1.6 0 0 1 6.4 4.3" fill="none" stroke="#F4A340" stroke-width="0.75"/><path d="M4.5 5.8 V7.8 M2.8 8.4 H6.2" stroke="#F4A340" stroke-width="0.9"/></svg>
<div class="t " style="left:610.20px;top:167px;font-size:9.30px;color:#2B2B2B;transform-origin:0 0;transform:scaleX(0.842);-webkit-text-stroke:0.3px currentColor;">Quiz</div>
<div class="t " style="left:575.20px;top:200px;font-size:7.85px;color:#A0A0A0;transform-origin:0 0;transform:scaleX(0.917);">Add information slide</div>
<div class="a" style="left:575.2px;top:218.6px;width:162.8px;height:34.1px;border:0.8px solid #EBEBEB;border-radius:4px;background:#fff"></div>
<div class="a" style="left:581.8px;top:226.1px;width:19.0px;height:19.0px;border-radius:50%;background:#FDEAEA"></div>
<svg style="left:587.3px;top:231.6px;" width="8" height="8" viewBox="0 0 8 8"><rect x="0.4" y="0.4" width="2.8" height="2.8" fill="none" stroke="#E05A5A" stroke-width="0.8"/><rect x="4.8" y="0.4" width="2.8" height="2.8" fill="none" stroke="#E05A5A" stroke-width="0.8"/><rect x="0.4" y="4.8" width="2.8" height="2.8" fill="none" stroke="#E05A5A" stroke-width="0.8"/><rect x="4.8" y="4.8" width="1.2" height="1.2" fill="#E05A5A"/><rect x="6.4" y="6.4" width="1.2" height="1.2" fill="#E05A5A"/></svg>
<div class="t " style="left:610.40px;top:231px;font-size:9.30px;color:#2B2B2B;transform-origin:0 0;transform:scaleX(0.912);-webkit-text-stroke:0.3px currentColor;">Joining Instructions</div>
<div class="t " style="left:575.20px;top:263px;font-size:7.40px;color:#A0A0A0;transform-origin:0 0;transform:scaleX(1.026);">Audience Q&amp;A</div>
<div class="a" style="left:719px;top:262.1px;width:19.2px;height:9.2px;border-radius:4.6px;background:#34A936"></div>
<div class="a" style="left:729.9px;top:263.2px;width:7.0px;height:7.0px;border-radius:50%;background:#FFFFFF"></div>
<div class="a" style="left:575.2px;top:280.6px;width:162.8px;height:34.2px;border:0.8px solid #EBEBEB;border-radius:4px;background:#fff"></div>
<div class="a" style="left:581.8px;top:288.2px;width:19.0px;height:19.0px;border-radius:50%;background:#E8F5E6"></div>
<svg style="left:586.8px;top:293.2px;" width="10" height="9" viewBox="0 0 10 9"><path d="M2.2 0.6 H9.2 V5.6 H8 M2.2 0.6 V2" fill="none" stroke="#4DAE4A" stroke-width="0.8"/><path d="M0.6 2.3 H7.4 V7 H3.3 L1.6 8.4 V7 H0.6Z" fill="none" stroke="#4DAE4A" stroke-width="0.8"/></svg>
<div class="t " style="left:610.40px;top:294px;font-size:9.00px;color:#2B2B2B;transform-origin:0 0;transform:scaleX(0.882);-webkit-text-stroke:0.3px currentColor;">Audience Q&amp;A</div>
<div class="a" style="left:573.4px;top:279px;width:135.9px;height:43px;border:3px solid #E0121C"></div>
<div class="t " style="left:574.90px;top:351px;font-size:8.35px;color:#BDBDBD;">Participants can join at</div>
<div class="t " style="left:574.90px;top:364px;font-size:8.35px;color:#BDBDBD;transform-origin:0 0;transform:scaleX(0.884);">slido.com with #751235</div>
<div class="a" style="left:715.5px;top:350.2px;width:22.2px;height:22.2px;border-radius:50%;background:#F2F2F2"></div>
<div class="a" style="left:722.0px;top:356.7px;width:9.2px;height:9.2px;border-radius:50%;background:#F2F2F2"></div>
<svg style="left:721.6px;top:356.3px;" width="10" height="10" viewBox="0 0 10 10"><circle cx="5" cy="5" r="4.4" fill="none" stroke="#333" stroke-width="0.85"/><path d="M3.6 3.9 A1.45 1.45 0 1 1 5.6 5.2 C5.1 5.5 5 5.8 5 6.4" fill="none" stroke="#333" stroke-width="0.8"/><circle cx="5" cy="7.6" r="0.5" fill="#333"/></svg>
<div class="a" style="left:565.6px;top:367px;width:184.4px;height:18.5px;background:#E6E6E6;"></div>
<div class="t " style="left:579.30px;top:371px;font-size:6.20px;color:#333333;">v0.21.0.2123 (c708b0f1-c666-4fcf-bb4d-a9ab98ce402a)</div>
<div class="a" style="left:0px;top:385.5px;width:750px;height:13px;background:#F3F3F3;"></div>
<div class="t " style="left:4.40px;top:389px;font-size:7.00px;color:#3A3A3A;transform-origin:0 0;transform:scaleX(0.857);">Slide 5 of 5</div>
<svg style="left:44.5px;top:387.5px;" width="10" height="9" viewBox="0 0 10 9"><rect x="0.5" y="0.5" width="7" height="7" fill="none" stroke="#777" stroke-width="0.7"/><path d="M4 0.5 V7.5" stroke="#777" stroke-width="0.6"/><path d="M5 4.5 L6.3 6 L8.8 2.8" fill="none" stroke="#555" stroke-width="0.8"/></svg>
<div class="t " style="left:63.60px;top:389px;font-size:7.00px;color:#3A3A3A;transform-origin:0 0;transform:scaleX(0.858);">English (India)</div>
<svg style="left:132.5px;top:387.3px;" width="9" height="9" viewBox="0 0 9 9"><circle cx="3.6" cy="3.6" r="3" fill="none" stroke="#555" stroke-width="0.8"/><path d="M2.2 3.2 L3.4 4.4 L5.2 2.4 M4.5 6 L7.8 8.6 M7.8 6 L5 8.6" fill="none" stroke="#555" stroke-width="0.8"/></svg>
<div class="t " style="left:143.60px;top:389px;font-size:7.00px;color:#3A3A3A;transform-origin:0 0;transform:scaleX(0.849);">Accessibility: Investigate</div>
<svg style="left:454.5px;top:387.5px;" width="8" height="8" viewBox="0 0 8 8"><path d="M2.5 0.5 L3.8 2.5 L2.3 3.5Z" fill="#999"/><rect x="0.5" y="3.5" width="6.5" height="1" fill="#999"/><rect x="0.5" y="5.2" width="6.5" height="0.7" fill="#AAA"/><rect x="0.5" y="6.6" width="6.5" height="0.7" fill="#AAA"/></svg>
<div class="t " style="left:465.00px;top:389px;font-size:7.00px;color:#3A3A3A;transform-origin:0 0;transform:scaleX(0.853);">Notes</div>
<svg style="left:491.3px;top:387.3px;" width="9.5" height="9" viewBox="0 0 9.5 9"><path d="M0.5 0.5 H8.5 V6 H4 L2 8 V6 H0.5Z" fill="#6A6A6A"/></svg>
<div class="t " style="left:502.00px;top:389px;font-size:7.00px;color:#3A3A3A;transform-origin:0 0;transform:scaleX(0.869);">Comments</div>
<div class="a" style="left:542.4px;top:386px;width:23.2px;height:12.5px;background:#C8C8C8;"></div>
<svg style="left:550px;top:388px;" width="9" height="8" viewBox="0 0 9 8"><rect x="0.5" y="0.5" width="7.5" height="7" fill="none" stroke="#7A7A7A" stroke-width="0.7"/><path d="M2.8 0.5 V7.5 M2.8 3 H8" stroke="#7A7A7A" stroke-width="0.6"/></svg>
<svg style="left:573.5px;top:388px;" width="9" height="8" viewBox="0 0 9 8"><rect x="0.5" y="0.5" width="3.2" height="3" fill="none" stroke="#888" stroke-width="0.6"/><rect x="4.8" y="0.5" width="3.2" height="3" fill="none" stroke="#888" stroke-width="0.6"/><rect x="0.5" y="4.5" width="3.2" height="3" fill="none" stroke="#888" stroke-width="0.6"/><rect x="4.8" y="4.5" width="3.2" height="3" fill="none" stroke="#888" stroke-width="0.6"/></svg>
<svg style="left:597.5px;top:388px;" width="10" height="8" viewBox="0 0 10 8"><path d="M0.5 0.8 H4.5 V7.3 H0.5Z M4.5 0.8 H8.5 V7.3 H4.5" fill="none" stroke="#888" stroke-width="0.6"/></svg>
<svg style="left:620.5px;top:387.3px;" width="8.5" height="10" viewBox="0 0 8.5 10"><rect x="0.3" y="0.3" width="7.6" height="0.9" fill="#888"/><rect x="1" y="1.2" width="6.2" height="4.5" fill="none" stroke="#888" stroke-width="0.6"/><path d="M4.1 5.7 V8.5 M2.5 8.8 H5.7" stroke="#888" stroke-width="0.6"/></svg>
<div class="a" style="left:639.4px;top:391.8px;width:4.2px;height:0.8px;background:#777;"></div>
<div class="a" style="left:647px;top:391.8px;width:57.4px;height:0.7px;background:#9A9A9A;"></div>
<div class="a" style="left:662.6px;top:386.8px;width:3.2px;height:9.8px;background:#6A6A6A;"></div>
<div class="a" style="left:675.3px;top:390px;width:0.7px;height:4px;background:#999;"></div>
<svg style="left:707.5px;top:389.5px;" width="5" height="5" viewBox="0 0 5 5"><path d="M2.2 0 V4.4 M0 2.2 H4.4" stroke="#777" stroke-width="0.8"/></svg>
<div class="t " style="left:719.40px;top:389px;font-size:7.00px;color:#3A3A3A;transform-origin:0 0;transform:scaleX(0.871);">61%</div>
<svg style="left:740.3px;top:387.5px;" width="7" height="8" viewBox="0 0 7 8"><rect x="0.4" y="0.6" width="6" height="6.6" fill="none" stroke="#888" stroke-width="0.6"/><path d="M1.5 1.5 L2.8 2.8 M5.3 1.5 L4 2.8 M1.5 6.3 L2.8 5 M5.3 6.3 L4 5" stroke="#777" stroke-width="0.7"/></svg>
<div class="a" style="left:0px;top:398.6px;width:750px;height:23.4px;background:#40261F;"></div>
<div class="a" style="left:230px;top:398.6px;width:364px;height:23.4px;background:linear-gradient(90deg,#43281F 0%,#452A20 55%,#3E2322 80%,#3A2024 100%)"></div>
<div class="a" style="left:594.4px;top:398.6px;width:155.6px;height:23.4px;background:linear-gradient(90deg,#1F3030 0%,#1E2E2F 100%)"></div>
<div class="a" style="left:0px;top:398.6px;width:28px;height:23.4px;background:#4A1F2A;"></div>
<svg style="left:9px;top:405px;" width="11" height="11" viewBox="0 0 11 11"><path d="M0.5 1.6 L4.8 1 V5.1 H0.5Z M5.5 0.9 L10.5 0.2 V5.1 H5.5Z M0.5 5.8 H4.8 V9.9 L0.5 9.3Z M5.5 5.8 H10.5 V10.7 L5.5 10Z" fill="#F3EEEE"/></svg>
<div class="a" style="left:28px;top:398.6px;width:202px;height:23.4px;background:#F2F2F2;"></div>
<svg style="left:35px;top:404.5px;" width="11" height="11" viewBox="0 0 11 11"><circle cx="6.4" cy="4.3" r="3.5" fill="none" stroke="#333" stroke-width="1"/><path d="M3.9 6.9 L0.7 10.1" stroke="#333" stroke-width="1.2"/></svg>
<div class="t " style="left:51.70px;top:407px;font-size:8.70px;color:#3A3A3A;">Type here to search</div>
<div class="a" style="left:238.7px;top:405.8px;width:9.2px;height:9.2px;border-radius:50%;border:1.3px solid #F2F2F2"></div>
<svg style="left:266.5px;top:404.5px;" width="11" height="12" viewBox="0 0 11 12"><rect x="1.5" y="2.5" width="5.5" height="6.5" fill="none" stroke="#C8C3C0" stroke-width="0.9"/><path d="M0.5 0.8 H8 M0.5 10.6 H8" stroke="#C8C3C0" stroke-width="0.9"/><path d="M9.8 1.2 V4.5 M9.8 6.5 V10" stroke="#C8C3C0" stroke-width="0.9"/></svg>
<div class="a" style="left:295.1px;top:402.4px;width:14.0px;height:14.0px;border-radius:50%;background:#5B6BEA"></div>
<svg style="left:297px;top:406px;" width="9" height="7" viewBox="0 0 9 7"><path d="M1.2 1.5 C2.5 0.5 6.5 0.5 7.8 1.5 L8.4 5 C7 6.3 2 6.3 0.6 5Z" fill="#FFFFFF"/><circle cx="3.2" cy="3.6" r="0.7" fill="#5B6BEA"/><circle cx="5.8" cy="3.6" r="0.7" fill="#5B6BEA"/></svg>
<div class="a" style="left:301.1px;top:409.6px;width:8.4px;height:8.4px;border-radius:50%;background:#5B6BEA"></div>
<div class="a" style="left:301.5px;top:410.0px;width:7.6px;height:7.6px;border-radius:50%;background:#E8413C"></div>
<div class="a" style="left:303.8px;top:412.3px;width:3.0px;height:3.0px;border-radius:50%;background:#FFFFFF"></div>
<div class="a" style="left:317.2px;top:398.6px;width:28.8px;height:23.4px;background:#5E4B45;"></div>
<div class="a" style="left:325.4px;top:403.6px;width:12.8px;height:12.8px;border-radius:50%;background:linear-gradient(45deg,#C9401E 0%,#E2603A 60%,#F08A5E 100%)"></div>
<div class="a" style="left:323.6px;top:406.9px;width:6.6px;height:6.4px;background:#C0401F;border-radius:0.8px"></div>
<div class="t" style="left:324.90px;top:407px;font-size:6.00px;color:#FFFFFF;font-weight:bold;">P</div>
<svg style="left:353.5px;top:402px;" width="14" height="16" viewBox="0 0 14 16"><defs><linearGradient id="dg" x1="0" y1="0" x2="0" y2="1"><stop offset="0" stop-color="#F7C531"/><stop offset="0.3" stop-color="#EE5C8C"/><stop offset="0.6" stop-color="#9A6BE0"/><stop offset="1" stop-color="#2FA6E8"/></linearGradient></defs><path d="M7 0.5 C9 3.5 12.8 6.5 12.8 10 A5.8 5.8 0 0 1 1.2 10 C1.2 6.5 5 3.5 7 0.5Z" fill="url(#dg)"/></svg>
<div class="a" style="left:290.8px;top:420.3px;width:22.8px;height:1.7px;background:#A5CDEB;"></div>
<div class="a" style="left:317.2px;top:420.3px;width:28.8px;height:1.7px;background:#A5CDEB;"></div>
<div class="a" style="left:348.9px;top:420.3px;width:24px;height:1.7px;background:#A5CDEB;"></div>
<div class="a" style="left:480.8px;top:398.6px;width:9.4px;height:23.4px;background:#EFEFEF;"></div>
<svg style="left:481.5px;top:403px;" width="8" height="5" viewBox="0 0 8 5"><path d="M1 4 L4 1 L7 4" fill="none" stroke="#444" stroke-width="0.9"/></svg>
<svg style="left:481.5px;top:413px;" width="8" height="5" viewBox="0 0 8 5"><path d="M1 1 L4 4 L7 1" fill="none" stroke="#444" stroke-width="0.9"/></svg>
<div class="a" style="left:496.0px;top:403.2px;width:13.6px;height:13.6px;border-radius:50%;background:#FFFFFF"></div>
<div class="a" style="left:497.0px;top:404.2px;width:11.6px;height:11.6px;border-radius:50%;background:#1E88E5"></div>
<div class="t" style="left:500.10px;top:405px;font-size:9.50px;color:#FFFFFF;font-weight:bold;">?</div>
<div class="a" style="left:504.4px;top:411.2px;width:6.8px;height:6.8px;border-radius:50%;background:#E81123"></div>
<div class="a" style="left:507.4px;top:412.6px;width:0.8px;height:2.6px;background:#FFFFFF;"></div>
<div class="a" style="left:507.4px;top:415.7px;width:0.8px;height:0.8px;background:#FFFFFF;"></div>
<svg style="left:526px;top:403px;" width="15" height="13" viewBox="0 0 15 13"><path d="M3.5 10 A3 3 0 0 1 3.2 4.2 A4.3 4.3 0 0 1 11.2 4.4 A2.8 2.8 0 0 1 11.5 10Z" fill="#D9ECFA"/><path d="M6.5 10 L5.8 12.5 M8.5 10 L8 12.5" stroke="#9CCAF0" stroke-width="0.8"/></svg>
<div class="t " style="left:545.00px;top:407px;font-size:7.60px;color:#F2F2F2;">32°C</div>
<svg style="left:572px;top:407.5px;" width="8" height="5" viewBox="0 0 8 5"><path d="M0.6 4.2 L3.8 1 L7 4.2" fill="none" stroke="#E8E8E8" stroke-width="0.95"/></svg>
<svg style="left:586px;top:404px;" width="9" height="12" viewBox="0 0 9 12"><rect x="1" y="0.6" width="4" height="2.3" fill="none" stroke="#D0D0D0" stroke-width="0.7"/><rect x="0.6" y="3.6" width="5.6" height="5.6" fill="none" stroke="#D0D0D0" stroke-width="0.8"/><path d="M6.2 5 L8.3 4 V8.8 L6.2 7.8" fill="none" stroke="#D0D0D0" stroke-width="0.7"/><path d="M3.4 9.2 V11.2 M1.8 11.3 H5" stroke="#D0D0D0" stroke-width="0.7"/></svg>
<svg style="left:599px;top:406px;" width="11" height="7" viewBox="0 0 11 7"><path d="M2 6.5 A1.9 1.9 0 0 1 2 2.9 A3.2 3.2 0 0 1 7.8 2.2 A2.2 2.2 0 0 1 8.6 6.5Z" fill="#F0F0F0"/></svg>
<svg style="left:612.5px;top:405px;" width="11" height="9" viewBox="0 0 11 9"><path d="M0.5 1.5 L2.5 0.5 L4.5 2" fill="none" stroke="#EEE" stroke-width="0.7"/><rect x="1.5" y="2.5" width="8.8" height="5" fill="#EEEEEE"/><rect x="10.3" y="4" width="0.6" height="2" fill="#EEE"/></svg>
<svg style="left:628px;top:404.5px;" width="9" height="11" viewBox="0 0 9 11"><path d="M0.8 10.5 A8.5 8.5 0 0 1 8.5 2.5 M2.8 10.5 A6.5 6.5 0 0 1 8.5 4.5 M4.8 10.5 A4.5 4.5 0 0 1 8.5 6.5" fill="none" stroke="#C8C8C8" stroke-width="0.6" stroke-dasharray="1 0.6"/><circle cx="8" cy="10" r="0.8" fill="#EEE"/></svg>
<svg style="left:640.5px;top:405px;" width="11" height="10" viewBox="0 0 11 10"><path d="M0.5 3.3 H2.6 L5.2 1 V9 L2.6 6.7 H0.5Z" fill="none" stroke="#E0E0E0" stroke-width="0.75"/><path d="M6.8 3.2 A2.5 2.5 0 0 1 6.8 6.8 M8.3 2 A4.2 4.2 0 0 1 8.3 8" fill="none" stroke="#E0E0E0" stroke-width="0.75"/></svg>
<div class="t " style="left:656.80px;top:408px;font-size:6.50px;color:#F2F2F2;transform-origin:0 0;transform:scaleX(0.966);">ENG</div>
<div class="t " style="left:688.00px;top:402px;font-size:6.90px;color:#F2F2F2;">16:59</div>
<div class="t " style="left:678.70px;top:412px;font-size:6.90px;color:#F2F2F2;">12-10-2021</div>
<svg style="left:724.5px;top:404.5px;" width="12" height="11" viewBox="0 0 12 11"><path d="M0.6 0.6 H10.8 V7.6 H7 L5.7 9.8 L4.4 7.6 H0.6Z" fill="none" stroke="#EEEEEE" stroke-width="0.85"/></svg>
</body></html>
